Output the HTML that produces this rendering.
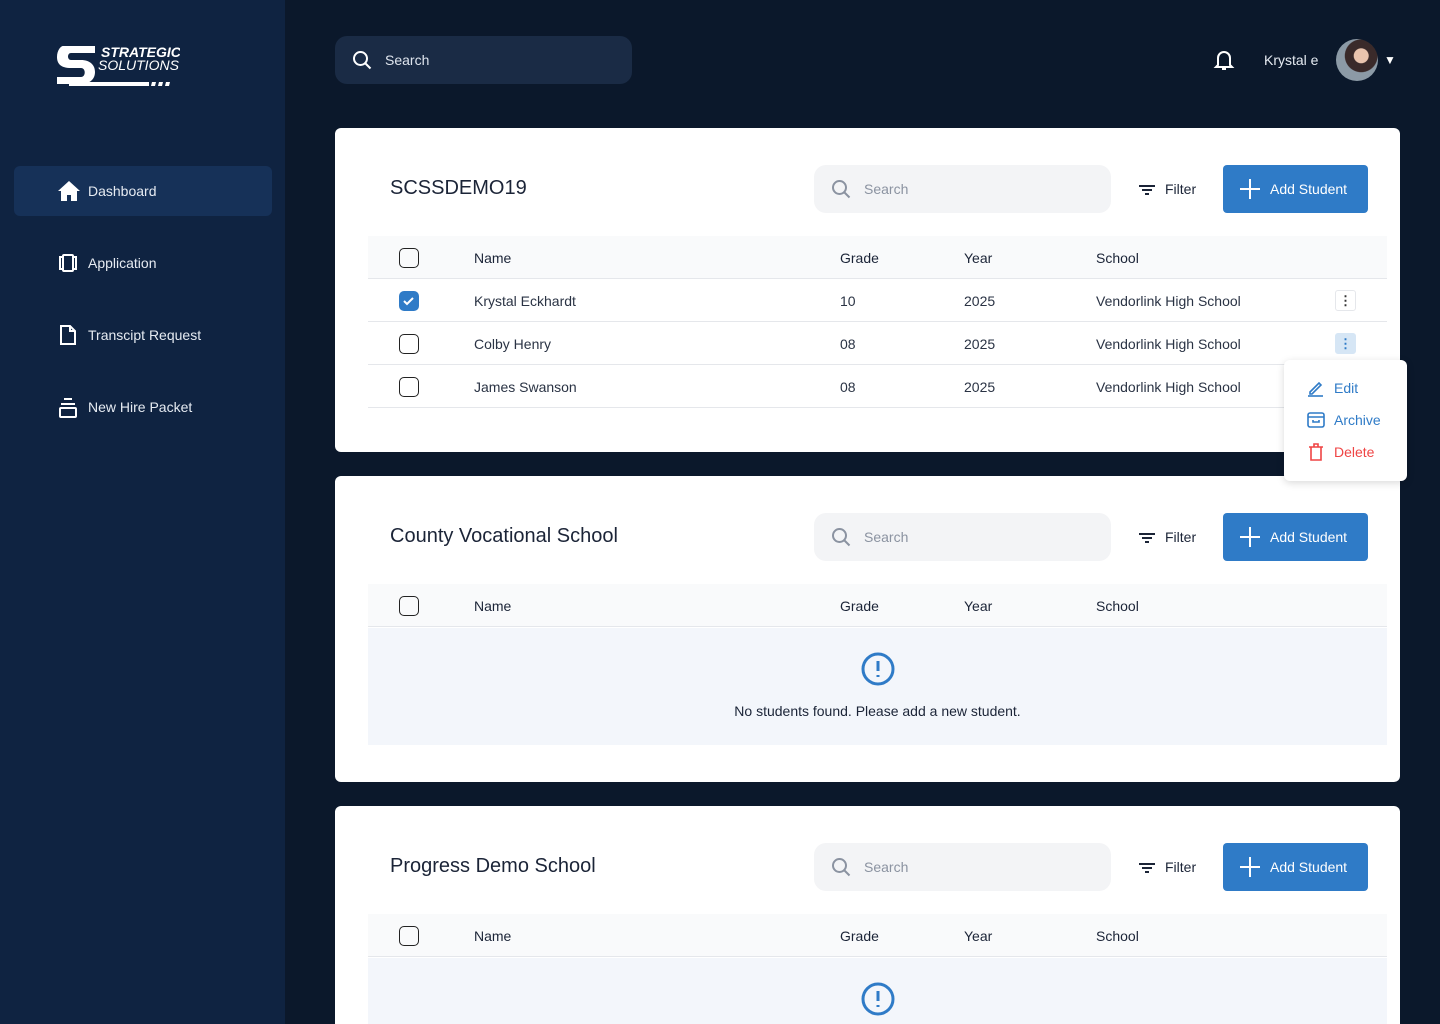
<!DOCTYPE html>
<html style="width:1440px;height:1024px;overflow:hidden"><head><meta charset="utf-8"><style>
*{box-sizing:border-box;margin:0;padding:0}
body{width:1440px;height:1024px;overflow:hidden;background:#0b182b;font-family:"Liberation Sans",sans-serif;position:relative;color:#1b2437}
.side{position:absolute;left:0;top:0;width:285px;height:1024px;background:#0f2341}
.nav{position:absolute;left:14px;width:258px;height:50px;border-radius:6px;color:#e6ebf2;font-size:14px}
.nav svg{position:absolute;left:44px;top:15px}
.nav span{position:absolute;left:74px;top:17px}
.nav.act{background:#163158}
.tsearch{position:absolute;left:335px;top:36px;width:297px;height:48px;border-radius:12px;background:#1a2b45;color:#dfe5ee;font-size:14px}
.card{position:absolute;left:335px;width:1065px;background:#fff;border-radius:6px;overflow:hidden}
.title{position:absolute;left:55px;font-size:20px;color:#1b2437}
.srch{position:absolute;left:479px;width:297px;height:48px;border-radius:12px;background:#f3f4f6;color:#8b93a1;font-size:14px}
.srch span{position:absolute;left:50px;top:16px}
.srch svg{position:absolute;left:17px;top:14px}
.filt{position:absolute;left:804px;font-size:14px;color:#1b2437}
.btn{position:absolute;left:888px;width:145px;height:48px;border-radius:4px;background:#2f7bc7;color:#fff;font-size:14px}
.btn span{position:absolute;left:47px;top:16px}
.btn svg{position:absolute;left:16px;top:13px}
.thead{position:absolute;left:33px;width:1019px;height:43px;background:#f9fafb;border-bottom:1px solid #e5e7eb;font-size:14px}
.row{position:absolute;left:33px;width:1019px;height:43px;border-bottom:1px solid #e5e7eb;font-size:14px;color:#2a3344}
.c{position:absolute;top:14px}
.cb{position:absolute;left:31px;top:12px;width:20px;height:20px;border:1.5px solid #222;border-radius:5px}
.empty{position:absolute;left:33px;width:1019px;height:117px;background:#f3f6fb;text-align:center;font-size:14px}
.keb{position:absolute;left:967px;top:11px;width:21px;height:21px;border:1px solid #e5e7eb;border-radius:3px;text-align:center;line-height:19px;font-size:13px;font-weight:bold;color:#333}
.menu{position:absolute;left:1284px;top:360px;width:123px;height:121px;background:#fff;border-radius:6px;box-shadow:0 2px 8px rgba(0,0,0,.15);font-size:14px}
.menu div{position:absolute;left:50px}
.menu svg{position:absolute;left:23px}
</style></head><body>
<div class="side">
  <svg style="position:absolute;left:55px;top:44px" width="125" height="44" viewBox="0 0 125 44">
    <path d="M8 2h32v7H16c-4 0-4 7 0 7h10c9 0 14 5 14 12s-5 12-14 12H2v-7h24c5 0 5-9 0-9H16C6 24 2 20 2 13 2 6 6 2 8 2z" fill="#fff"/>
    <path d="M14 38h80v4H14z" fill="#fff"/>
    <path d="M97 38h4l-1 4h-4zM104 38h4l-1 4h-4zM111 38h4l-1 4h-4z" fill="#fff"/>
    <text x="46" y="13" fill="#fff" font-size="14" font-weight="bold" font-style="italic" font-family="Liberation Sans">STRATEGIC</text>
    <text x="43" y="26" fill="#fff" font-size="14" font-style="italic" font-family="Liberation Sans">SOLUTIONS</text>
  </svg>
  <div class="nav act" style="top:166px"><svg width="22" height="20" viewBox="0 0 22 20"><path d="M11 0L0 10h3v10h6v-6h4v6h6V10h3z" fill="#fff"/></svg><span>Dashboard</span></div>
  <div class="nav" style="top:238px"><svg width="20" height="20" viewBox="0 0 20 20" fill="none" stroke="#fff" stroke-width="2"><rect x="5" y="2" width="10" height="16" rx="1"/><path d="M5 4H2v12h3M15 4h3v12h-3"/></svg><span>Application</span></div>
  <div class="nav" style="top:310px"><svg width="20" height="20" viewBox="0 0 20 20" fill="none" stroke="#fff" stroke-width="2"><path d="M3 1h9l5 5v13H3z"/><path d="M12 1v5h5"/></svg><span>Transcipt Request</span></div>
  <div class="nav" style="top:382px"><svg width="20" height="22" viewBox="0 0 20 22" fill="none" stroke="#fff" stroke-width="2"><path d="M6 2h8M3 7h14"/><rect x="2" y="11" width="16" height="9" rx="1"/></svg><span>New Hire Packet</span></div>
</div>

<div class="tsearch"><svg style="position:absolute;left:17px;top:14px" width="20" height="20" viewBox="0 0 20 20" fill="none" stroke="#fff" stroke-width="2"><circle cx="8.5" cy="8.5" r="6.5"/><path d="M13.5 13.5l5 5"/></svg><span style="position:absolute;left:50px;top:16px">Search</span></div>
<svg style="position:absolute;left:1213px;top:49px" width="22" height="22" viewBox="0 0 22 22" fill="none" stroke="#fff" stroke-width="2"><path d="M5 16V9a6 6 0 0 1 12 0v7l2 2H3z"/><path d="M9 20h4"/></svg>
<div style="position:absolute;left:1264px;top:52px;color:#e6ebf2;font-size:14px">Krystal e</div>
<div style="position:absolute;left:1336px;top:39px;width:42px;height:42px;border-radius:50%;background:radial-gradient(circle at 60% 40%,#e9c4ae 0 20%,#3a2a2a 22% 45%,#8c9aa6 47%)"></div>
<div style="position:absolute;left:1384px;top:53px;color:#fff;font-size:12px">▼</div>

<div class="card" style="top:128px;height:324px">
  <div class="title" style="top:49px">SCSSDEMO19</div>
  <div class="srch" style="top:37px"><svg width="20" height="20" viewBox="0 0 20 20" fill="none" stroke="#8b93a1" stroke-width="2"><circle cx="8.5" cy="8.5" r="6.5"/><path d="M13.5 13.5l5 5"/></svg><span>Search</span></div>
  <div class="filt" style="top:53px"><svg style="position:absolute;left:0;top:3px" width="16" height="12" viewBox="0 0 16 12" fill="none" stroke="#1b2437" stroke-width="2"><path d="M0 2h16M3 6h10M6 10h4"/></svg><span style="position:absolute;left:26px;top:0">Filter</span></div>
  <div class="btn" style="top:37px"><svg width="22" height="22" viewBox="0 0 22 22" stroke="#fff" stroke-width="2"><path d="M11 1v20M1 11h20"/></svg><span>Add Student</span></div>
  <div class="thead" style="top:108px"><div class="cb"></div><div class="c" style="left:106px">Name</div><div class="c" style="left:472px">Grade</div><div class="c" style="left:596px">Year</div><div class="c" style="left:728px">School</div></div>
  <div class="row" style="top:151px"><div class="cb" style="background:#2f7bc7;border-color:#2f7bc7"><svg width="17" height="17" viewBox="0 0 17 17" fill="none" stroke="#fff" stroke-width="2"><path d="M4 9l3 3 6-6"/></svg></div><div class="c" style="left:106px">Krystal Eckhardt</div><div class="c" style="left:472px">10</div><div class="c" style="left:596px">2025</div><div class="c" style="left:728px">Vendorlink High School</div><div class="keb">⋮</div></div>
  <div class="row" style="top:194px"><div class="cb"></div><div class="c" style="left:106px">Colby Henry</div><div class="c" style="left:472px">08</div><div class="c" style="left:596px">2025</div><div class="c" style="left:728px">Vendorlink High School</div><div class="keb" style="background:#d6e6f5;border-color:#d6e6f5;color:#2f7bc7">⋮</div></div>
  <div class="row" style="top:237px"><div class="cb"></div><div class="c" style="left:106px">James Swanson</div><div class="c" style="left:472px">08</div><div class="c" style="left:596px">2025</div><div class="c" style="left:728px">Vendorlink High School</div></div>
</div>

<div class="card" style="top:476px;height:306px">
  <div class="title" style="top:49px">County Vocational School</div>
  <div class="srch" style="top:37px"><svg width="20" height="20" viewBox="0 0 20 20" fill="none" stroke="#8b93a1" stroke-width="2"><circle cx="8.5" cy="8.5" r="6.5"/><path d="M13.5 13.5l5 5"/></svg><span>Search</span></div>
  <div class="filt" style="top:53px"><svg style="position:absolute;left:0;top:3px" width="16" height="12" viewBox="0 0 16 12" fill="none" stroke="#1b2437" stroke-width="2"><path d="M0 2h16M3 6h10M6 10h4"/></svg><span style="position:absolute;left:26px;top:0">Filter</span></div>
  <div class="btn" style="top:37px"><svg width="22" height="22" viewBox="0 0 22 22" stroke="#fff" stroke-width="2"><path d="M11 1v20M1 11h20"/></svg><span>Add Student</span></div>
  <div class="thead" style="top:108px"><div class="cb"></div><div class="c" style="left:106px">Name</div><div class="c" style="left:472px">Grade</div><div class="c" style="left:596px">Year</div><div class="c" style="left:728px">School</div></div>
  <div class="empty" style="top:152px"><svg style="position:absolute;left:493px;top:24px" width="34" height="34" viewBox="0 0 34 34" fill="none" stroke="#2f7bc7" stroke-width="3"><circle cx="17" cy="17" r="15"/><path d="M17 9v10M17 23v2"/></svg><div style="position:absolute;left:0;right:0;top:75px">No students found. Please add a new student.</div></div>
</div>

<div class="card" style="top:806px;height:218px;border-radius:6px 6px 0 0">
  <div class="title" style="top:49px">Progress Demo School</div>
  <div class="srch" style="top:37px"><svg width="20" height="20" viewBox="0 0 20 20" fill="none" stroke="#8b93a1" stroke-width="2"><circle cx="8.5" cy="8.5" r="6.5"/><path d="M13.5 13.5l5 5"/></svg><span>Search</span></div>
  <div class="filt" style="top:53px"><svg style="position:absolute;left:0;top:3px" width="16" height="12" viewBox="0 0 16 12" fill="none" stroke="#1b2437" stroke-width="2"><path d="M0 2h16M3 6h10M6 10h4"/></svg><span style="position:absolute;left:26px;top:0">Filter</span></div>
  <div class="btn" style="top:37px"><svg width="22" height="22" viewBox="0 0 22 22" stroke="#fff" stroke-width="2"><path d="M11 1v20M1 11h20"/></svg><span>Add Student</span></div>
  <div class="thead" style="top:108px"><div class="cb"></div><div class="c" style="left:106px">Name</div><div class="c" style="left:472px">Grade</div><div class="c" style="left:596px">Year</div><div class="c" style="left:728px">School</div></div>
  <div class="empty" style="top:152px;height:66px"><svg style="position:absolute;left:493px;top:24px" width="34" height="34" viewBox="0 0 34 34" fill="none" stroke="#2f7bc7" stroke-width="3"><circle cx="17" cy="17" r="15"/><path d="M17 9v10M17 23v2"/></svg></div>
</div>

<div class="menu">
  <svg style="top:19px" width="18" height="18" viewBox="0 0 18 18" fill="none" stroke="#2f7bc7" stroke-width="1.6"><path d="M3 13l9-9 2 2-9 9H3z"/><path d="M1 17h15"/></svg><div style="top:20px;color:#2f7bc7">Edit</div>
  <svg style="top:51px" width="18" height="18" viewBox="0 0 18 18" fill="none" stroke="#2f7bc7" stroke-width="1.6"><rect x="1" y="2" width="16" height="14" rx="2"/><path d="M1 6h16M6 9v2h6V9"/></svg><div style="top:52px;color:#2f7bc7">Archive</div>
  <svg style="top:83px" width="18" height="18" viewBox="0 0 18 18" fill="none" stroke="#ef4444" stroke-width="1.6"><path d="M2 4h14M7 4V1h4v3M4 4v13h10V4"/></svg><div style="top:84px;color:#ef4444">Delete</div>
</div>
</body></html>
